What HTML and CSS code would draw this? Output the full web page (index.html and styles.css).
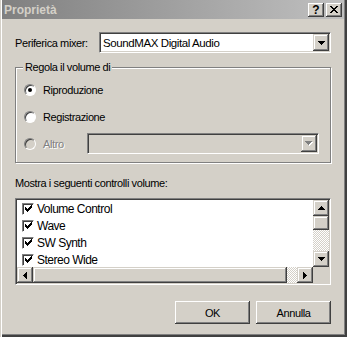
FILE: index.html
```html
<!DOCTYPE html>
<html lang="it">
<head>
    <meta charset="UTF-8">
    <meta name="viewport" content="width=device-width, initial-scale=1.0">
    <title>Proprietà</title>
    <link rel="stylesheet" href="styles.css">
</head>
<body>
    <div class="window">
        <div class="titlebar">
            <span class="title">Proprietà</span>
            <div class="caption-buttons">
                <span class="cap-btn help">?</span>
                <span class="cap-btn close">
                    <svg width="8" height="7" viewBox="0 0 8 7" shape-rendering="crispEdges"><path d="M0 0h2v1H0zM6 0h2v1H6zM1 1h2v1H1zM5 1h2v1H5zM2 2h4v1H2zM3 3h2v1H3zM2 4h4v1H2zM1 5h2v1H1zM5 5h2v1H5zM0 6h2v1H0zM6 6h2v1H6z" fill="#000"/></svg>
                </span>
            </div>
        </div>
        <div class="content">
            <div class="mixer-row">
                <span class="mixer-label">Periferica mixer:</span>
                <div class="combo">
                    <span class="combo-text">SoundMAX Digital Audio</span>
                    <span class="combo-btn">
                        <svg width="7" height="4" viewBox="0 0 7 4" shape-rendering="crispEdges"><path d="M0 0h7v1H0zM1 1h5v1H1zM2 2h3v1H2zM3 3h1v1H3z" fill="#000"/></svg>
                    </span>
                </div>
            </div>

            <fieldset class="group">
                <legend>Regola il volume di</legend>
                <div class="radio-row">
                    <span class="radio checked"></span>
                    <span class="radio-label">Riproduzione</span>
                </div>
                <div class="radio-row">
                    <span class="radio"></span>
                    <span class="radio-label">Registrazione</span>
                </div>
                <div class="radio-row disabled">
                    <span class="radio"></span>
                    <span class="radio-label other-label">Altro</span>
                    <div class="combo combo-disabled">
                        <span class="combo-text"></span>
                        <span class="combo-btn">
                            <svg width="8" height="5" viewBox="0 0 8 5" shape-rendering="crispEdges"><path d="M1 1h7v1H1zM2 2h5v1H2zM3 3h3v1H3zM4 4h1v1H4z" fill="#fff"/><path d="M0 0h7v1H0zM1 1h5v1H1zM2 2h3v1H2zM3 3h1v1H3z" fill="#808080"/></svg>
                        </span>
                    </div>
                </div>
            </fieldset>

            <div class="list-caption">Mostra i seguenti controlli volume:</div>
            <div class="listbox">
                <ul class="items">
                    <li><span class="check"></span>Volume Control</li>
                    <li><span class="check"></span>Wave</li>
                    <li><span class="check"></span>SW Synth</li>
                    <li><span class="check"></span>Stereo Wide</li>
                </ul>
                <div class="vscroll">
                    <span class="sb-btn">
                        <svg width="7" height="4" viewBox="0 0 7 4" shape-rendering="crispEdges"><path d="M3 0h1v1H3zM2 1h3v1H2zM1 2h5v1H1zM0 3h7v1H0z" fill="#000"/></svg>
                    </span>
                    <span class="sb-thumb"></span>
                    <span class="sb-track"></span>
                    <span class="sb-btn">
                        <svg width="7" height="4" viewBox="0 0 7 4" shape-rendering="crispEdges"><path d="M0 0h7v1H0zM1 1h5v1H1zM2 2h3v1H2zM3 3h1v1H3z" fill="#000"/></svg>
                    </span>
                </div>
                <div class="hscroll">
                    <span class="sb-btn">
                        <svg width="4" height="7" viewBox="0 0 4 7" shape-rendering="crispEdges"><path d="M3 0h1v7H3zM2 1h1v5H2zM1 2h1v3H1zM0 3h1v1H0z" fill="#000"/></svg>
                    </span>
                    <span class="sb-thumb"></span>
                    <span class="sb-track"></span>
                    <span class="sb-btn">
                        <svg width="4" height="7" viewBox="0 0 4 7" shape-rendering="crispEdges"><path d="M0 0h1v7H0zM1 1h1v5H1zM2 2h1v3H2zM3 3h1v1H3z" fill="#000"/></svg>
                    </span>
                </div>
                <div class="corner"></div>
            </div>

            <div class="actions">
                <button type="button">OK</button>
                <button type="button">Annulla</button>
            </div>
        </div>
    </div>
</body>
</html>
```

FILE: styles.css
```css
* {
    margin: 0;
    padding: 0;
    box-sizing: border-box;
}
body {
    font-family: "Liberation Sans", Arial, sans-serif;
    font-size: 11px;
    letter-spacing: -0.4px;
    color: #000;
    background: #d4d0c8;
}
.window {
    width: 347px;
    height: 337px;
    background: #d4d0c8;
    padding: 0 3px 3px 2px;
    box-shadow: inset 1px 0 0 #d4d0c8, inset 2px 0 0 #fff,
                inset -2px -2px 0 #404040, inset -3px -3px 0 #808080;
}
.titlebar {
    height: 19px;
    display: flex;
    align-items: center;
    justify-content: space-between;
    padding: 0 2px 0 2px;
    background: linear-gradient(to right, #808080, #c0c0c0);
}
.title {
    font-size: 12px;
    font-weight: bold;
    letter-spacing: 0;
    color: #d4d0c8;
}
.caption-buttons {
    display: flex;
    gap: 2px;
}
.cap-btn {
    width: 16px;
    height: 14px;
    display: flex;
    align-items: center;
    justify-content: center;
    background: #d4d0c8;
    box-shadow: inset -1px -1px 0 #404040, inset 1px 1px 0 #fff,
                inset -2px -2px 0 #808080;
}
.help {
    font-weight: bold;
    font-size: 12px;
    letter-spacing: 0;
    line-height: 14px;
}
.content {
    padding: 13px 13px 0 13px;
}
.mixer-row {
    display: flex;
    align-items: center;
    height: 21px;
}
.mixer-label {
    width: 84px;
}
.combo {
    width: 232px;
    height: 21px;
    display: flex;
    align-items: center;
    background: #fff;
    border: 1px solid;
    border-color: #808080 #fff #fff #808080;
    box-shadow: inset 1px 1px 0 #404040, inset -1px -1px 0 #d4d0c8;
    padding: 1px;
}
.combo-text {
    flex: 1;
    padding-left: 2px;
    font-size: 11.5px;
}
.combo-btn {
    width: 16px;
    height: 17px;
    display: flex;
    align-items: center;
    justify-content: center;
    background: #d4d0c8;
    box-shadow: inset -1px -1px 0 #404040, inset 1px 1px 0 #d4d0c8,
                inset -2px -2px 0 #808080, inset 2px 2px 0 #fff;
}
.combo-disabled {
    background: #d4d0c8;
}
.group {
    margin-top: 7px;
    min-width: 0;
    border: 1px solid #808080;
    box-shadow: 1px 1px 0 #fff, inset 1px 1px 0 #fff;
    padding: 5px 8px 8px 8px;
    display: flex;
    flex-direction: column;
    gap: 6px;
}
.group legend {
    line-height: 14px;
    padding: 0 2px;
    margin-left: -1px;
    background: #d4d0c8;
}
.radio-row {
    display: flex;
    align-items: center;
    height: 21px;
}
.radio {
    width: 12px;
    height: 12px;
    border-radius: 50%;
    border: 1px solid;
    border-color: #808080 #fff #fff #808080;
    background: #fff;
    box-shadow: inset 1px 1px 0 #404040;
    display: flex;
    align-items: center;
    justify-content: center;
}
.radio.checked::after {
    content: "";
    width: 4px;
    height: 4px;
    border-radius: 50%;
    background: #000;
}
.radio-label {
    margin-left: 7px;
}
.disabled .radio {
    background: #d4d0c8;
}
.disabled .radio-label {
    color: #808080;
    text-shadow: 1px 1px 0 #fff;
}
.other-label {
    width: 44px;
}
.list-caption {
    margin-top: 13px;
    line-height: 14px;
}
.listbox {
    margin-top: 8px;
    height: 87px;
    background: #fff;
    border: 1px solid;
    border-color: #808080 #fff #fff #808080;
    box-shadow: inset 1px 1px 0 #404040, inset -1px -1px 0 #d4d0c8;
    padding: 1px;
    display: grid;
    grid-template-columns: 1fr 16px;
    grid-template-rows: 1fr 16px;
}
.items {
    list-style: none;
    overflow: hidden;
    font-size: 12px;
    letter-spacing: -0.5px;
}
.items li {
    height: 17px;
    display: flex;
    align-items: center;
    padding-left: 5px;
}
.check {
    width: 12px;
    height: 12px;
    margin-right: 3px;
    border: 1px solid;
    border-color: #808080 #fff #fff #808080;
    box-shadow: inset 1px 1px 0 #404040;
    background: #fff url("data:image/svg+xml,%3Csvg xmlns='http://www.w3.org/2000/svg' width='10' height='10' shape-rendering='crispEdges'%3E%3Cpath d='M8 1h1v1H8zM7 2h2v1H7zM2 3h1v1H2zM6 3h3v1H6zM2 4h2v1H2zM5 4h3v1H5zM2 5h5v1H2zM3 6h3v1H3zM4 7h1v1H4z' fill='%23000'/%3E%3C/svg%3E") no-repeat 0 0;
}
.vscroll {
    display: flex;
    flex-direction: column;
    background: repeating-conic-gradient(#fff 0 25%, #d4d0c8 0 50%) 0 0 / 2px 2px;
}
.hscroll {
    display: flex;
    background: repeating-conic-gradient(#fff 0 25%, #d4d0c8 0 50%) 0 0 / 2px 2px;
}
.sb-btn, .sb-thumb {
    width: 16px;
    height: 16px;
    flex-shrink: 0;
    display: flex;
    align-items: center;
    justify-content: center;
    background: #d4d0c8;
    box-shadow: inset -1px -1px 0 #404040, inset 1px 1px 0 #d4d0c8,
                inset -2px -2px 0 #808080, inset 2px 2px 0 #fff;
}
.vscroll .sb-thumb {
    height: 14px;
}
.hscroll .sb-thumb {
    width: 254px;
}
.sb-track {
    flex: 1;
}
.corner {
    background: #d4d0c8;
}
.actions {
    margin-top: 16px;
    display: flex;
    justify-content: flex-end;
    gap: 6px;
}
.actions button {
    width: 75px;
    height: 23px;
    border: none;
    background: #d4d0c8;
    font-family: inherit;
    font-size: 11px;
    letter-spacing: -0.4px;
    color: #000;
    box-shadow: inset -1px -1px 0 #404040, inset 1px 1px 0 #fff,
                inset -2px -2px 0 #808080, inset 2px 2px 0 #d4d0c8;
}
```
